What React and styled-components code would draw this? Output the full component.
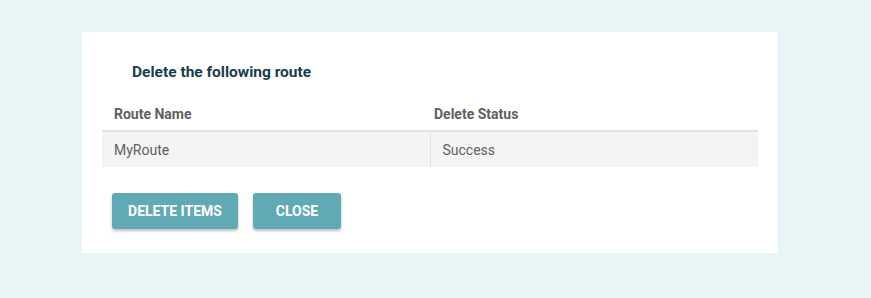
import styled, { createGlobalStyle } from 'styled-components';

const GlobalStyle = createGlobalStyle`
  html, body {
    margin: 0;
    padding: 0;
    background: #e8f5f7;
    font-family: Roboto, "Liberation Sans", sans-serif;
  }
`;

const Page = styled.div`
  height: 298px;
  padding: 32px 0 0 82px;
  box-sizing: border-box;
`;

const Card = styled.div`
  width: 696px;
  height: 221px;
  background: #ffffff;
  box-sizing: border-box;
  padding: 30px 20px 0 20px;
`;

const Title = styled.h2`
  margin: 0 0 0 30px;
  font-size: 15.5px;
  font-weight: 700;
  color: #173f48;
  line-height: 20px;
`;

const Table = styled.table`
  width: 656px;
  margin-top: 15px;
  border-collapse: collapse;
  font-size: 14px;
  color: #5f5f5f;
`;

const HeadCell = styled.th`
  text-align: left;
  font-weight: 700;
  height: 34px;
  padding: 0 0 0 ${(p) => p.$pad}px;
  border-bottom: 2px solid #e2e2e2;
  width: ${(p) => p.$width}px;
  box-sizing: border-box;
`;

const Row = styled.tr`
  background: #f4f4f4;
`;

const Cell = styled.td`
  height: 36px;
  padding: 0 0 0 12px;
  box-sizing: border-box;
  & + & {
    border-left: 1px solid #e2e2e2;
  }
`;

const Actions = styled.div`
  display: flex;
  gap: 15px;
  margin: 26px 0 0 10px;
`;

const Button = styled.button`
  height: 36px;
  width: ${(p) => p.$width}px;
  padding: 0;
  border: none;
  border-radius: 3px;
  background: #5faab4;
  color: #ffffff;
  font-family: Roboto, "Liberation Sans", sans-serif;
  font-size: 14px;
  font-weight: 700;
  box-shadow: 0 2px 3px rgba(0, 0, 0, 0.25);
  cursor: pointer;
`;

export default function App() {
  return (
    <>
      <GlobalStyle />
      <Page>
        <Card>
          <Title>Delete the following route</Title>
          <Table>
            <thead>
              <tr>
                <HeadCell $pad={12} $width={328}>Route Name</HeadCell>
                <HeadCell $pad={4}>Delete Status</HeadCell>
              </tr>
            </thead>
            <tbody>
              <Row>
                <Cell>MyRoute</Cell>
                <Cell>Success</Cell>
              </Row>
            </tbody>
          </Table>
          <Actions>
            <Button $width={126}>DELETE ITEMS</Button>
            <Button $width={88}>CLOSE</Button>
          </Actions>
        </Card>
      </Page>
    </>
  );
}
